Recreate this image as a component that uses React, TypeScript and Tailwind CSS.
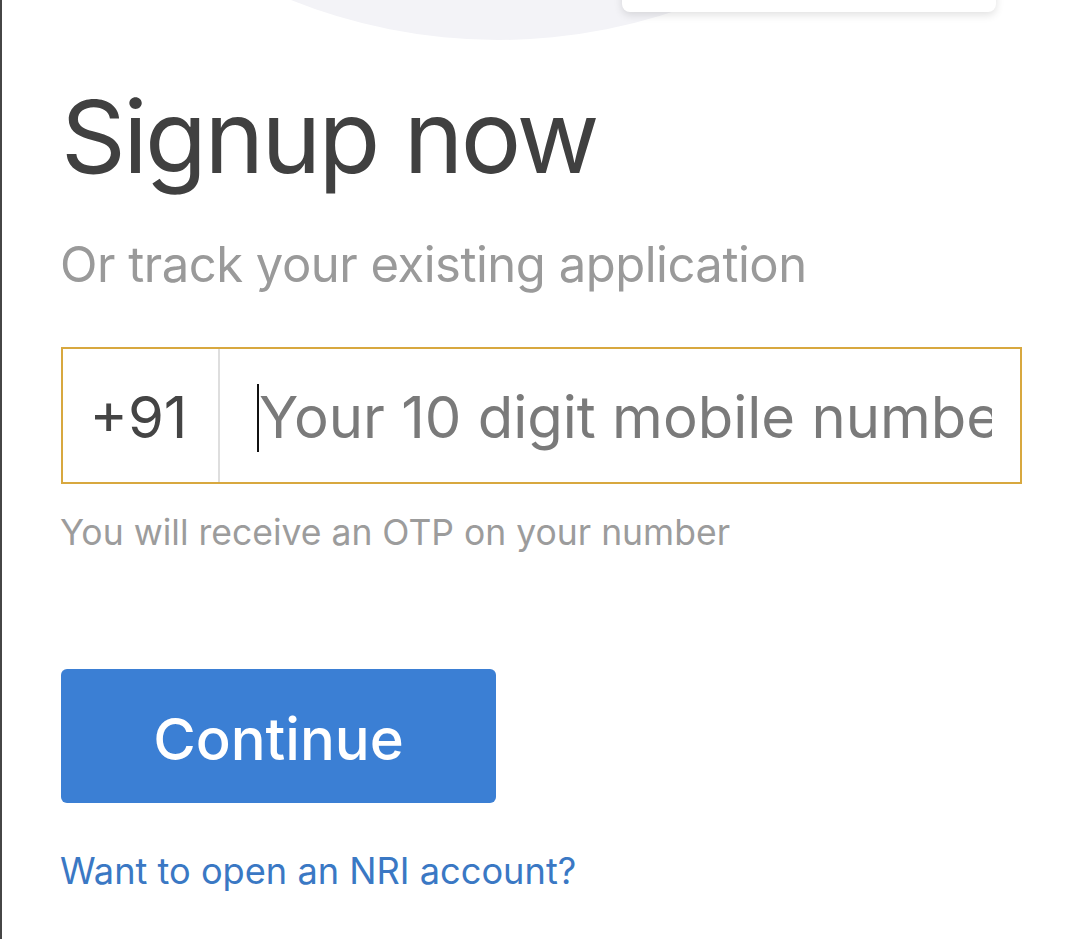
export default function App() {
  return (
    <div
      className="relative w-[1080px] h-[939px] overflow-hidden bg-white border-l-2 border-[#464646]"
      style={{ fontFamily: 'Inter, "Noto Sans", sans-serif' }}
    >
      {/* Decorative circle and card peeking in at the top */}
      <div className="absolute left-[-60px] top-[-1072px] w-[1112px] h-[1112px] rounded-full bg-[#f3f3f7] pointer-events-none" />
      <div className="absolute left-[620px] top-[-20px] w-[374px] h-[32px] rounded-b-[8px] bg-white shadow-[0_3px_8px_rgba(0,0,0,0.12)]" />

      <div className="relative flex flex-col pl-[59px] pr-[58px]">
        <h1 className="pt-[85px] pl-[-2px] text-[101px] leading-[102px] font-normal tracking-[-2.6px] text-[#404040]">
          Signup now
        </h1>
        <p className="mt-[50px] -ml-[1px] text-[49px] leading-[56px] tracking-[-0.5px] text-[#9a9a9a]">
          Or track your existing application
        </p>

        {/* Mobile number field */}
        <div className="mt-[54px] flex h-[137px] border-2 border-[#d8a83f]">
          <div className="flex w-[157px] items-center justify-center pr-[4px] pt-[4px] border-r-2 border-[#dedede] text-[58px] text-[#444444]">
            +91
          </div>
          <div className="flex flex-1 items-center overflow-hidden pl-[37px] pr-[28px] pt-[4px]">
            <span className="shrink-0 w-[2px] h-[68px] bg-[#111]" />
            <span className="overflow-hidden whitespace-nowrap text-[58px] text-[#7a7a7a]">
              Your 10 digit mobile number
            </span>
          </div>
        </div>
        <p className="mt-[29px] -ml-[1px] text-[35.5px] leading-[40px] text-[#9c9c9c]">
          You will receive an OTP on your number
        </p>

        <button className="mt-[116px] flex h-[134px] w-[435px] items-center justify-center rounded-[6px] bg-[#3b7fd4] pt-[6px] text-[58px] font-medium text-white">
          Continue
        </button>

        <a className="mt-[46px] -ml-[1px] text-[36.2px] leading-[44px] text-[#3a78c4]">
          Want to open an NRI account?
        </a>
      </div>
    </div>
  )
}
